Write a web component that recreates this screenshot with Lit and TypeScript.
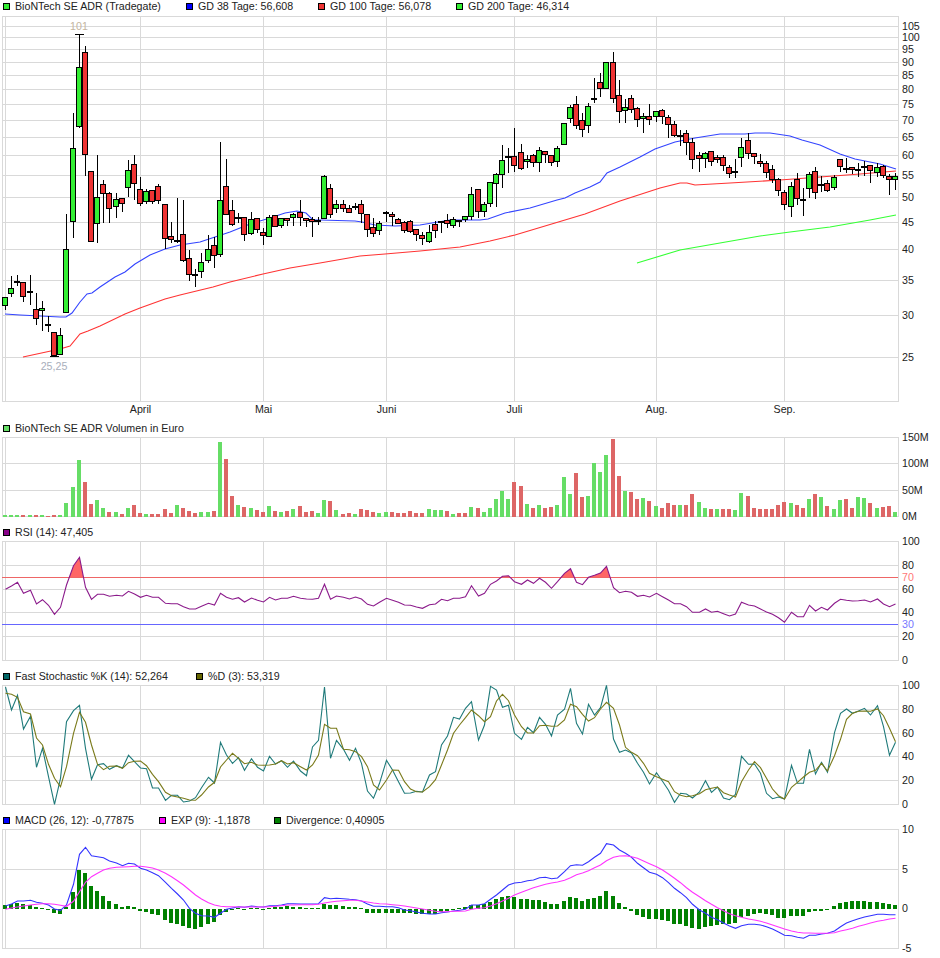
import { LitElement, css, html, svg } from "lit";
import { customElement } from "lit/decorators.js";

// all chart data below is in page pixels, read off the screenshot
type Candle = [number, number, number, number, "g" | "r"];

const CANDLES: Candle[] = [
  [297, 306, 297, 310, "g"], [288, 294, 276, 297, "g"], [281, 281, 275, 286, "g"], [282, 297, 282, 302, "r"], [291, 291, 275, 305, "g"],
  [309, 319, 293, 325, "r"], [308, 311, 301, 331, "g"], [324, 324, 316, 332, "g"], [332, 356, 332, 356, "r"], [335, 355, 328, 355, "g"],
  [249, 313, 214, 313, "g"], [148, 222, 113, 238, "g"], [67, 127, 34, 128, "g"], [52, 155, 46, 176, "r"], [171, 242, 171, 242, "r"],
  [197, 224, 155, 243, "g"], [184, 194, 180, 223, "r"], [193, 209, 192, 223, "r"], [199, 207, 193, 218, "g"], [198, 204, 198, 212, "r"],
  [170, 188, 160, 197, "g"], [164, 184, 155, 200, "r"], [189, 204, 177, 206, "r"], [191, 202, 189, 204, "g"], [190, 202, 190, 204, "r"],
  [186, 201, 184, 204, "r"], [204, 239, 204, 249, "r"], [236, 240, 222, 243, "r"], [240, 240, 198, 243, "g"], [234, 261, 200, 262, "r"],
  [258, 275, 250, 281, "r"], [274, 276, 269, 287, "r"], [262, 272, 253, 278, "g"], [249, 261, 235, 263, "g"], [245, 256, 237, 268, "r"],
  [200, 255, 142, 257, "g"], [186, 215, 159, 215, "r"], [210, 225, 200, 226, "r"], [217, 217, 213, 223, "g"], [217, 235, 217, 241, "r"],
  [219, 234, 212, 235, "g"], [218, 230, 218, 233, "r"], [232, 236, 228, 245, "r"], [217, 237, 215, 237, "g"], [215, 227, 215, 227, "r"],
  [218, 226, 218, 228, "g"], [218, 221, 218, 226, "r"], [214, 218, 213, 226, "g"], [212, 218, 200, 226, "r"], [218, 221, 218, 227, "r"],
  [219, 222, 217, 237, "r"], [220, 222, 217, 225, "r"], [176, 219, 175, 219, "g"], [188, 215, 184, 218, "r"], [204, 209, 200, 213, "g"],
  [204, 209, 200, 212, "r"], [208, 213, 205, 213, "r"], [206, 206, 203, 210, "g"], [204, 214, 200, 223, "r"], [214, 230, 214, 237, "r"],
  [227, 234, 218, 237, "r"], [223, 231, 221, 235, "g"], [212, 212, 211, 222, "g"], [214, 217, 212, 226, "r"], [219, 224, 218, 224, "r"],
  [222, 231, 221, 233, "r"], [221, 232, 220, 233, "r"], [229, 235, 229, 241, "r"], [235, 239, 232, 245, "r"], [232, 242, 225, 243, "g"],
  [224, 231, 221, 238, "r"], [221, 223, 221, 233, "g"], [220, 224, 214, 228, "r"], [219, 226, 217, 228, "g"], [220, 221, 220, 227, "g"],
  [216, 220, 216, 222, "g"], [194, 217, 187, 220, "g"], [189, 212, 189, 218, "r"], [204, 212, 202, 217, "g"], [182, 204, 182, 207, "g"],
  [174, 184, 173, 207, "g"], [160, 175, 145, 188, "g"], [156, 158, 148, 173, "r"], [156, 166, 128, 172, "r"], [152, 169, 144, 170, "r"],
  [159, 162, 155, 168, "g"], [155, 163, 154, 167, "r"], [150, 163, 147, 172, "g"], [151, 155, 151, 163, "r"], [155, 163, 155, 166, "r"],
  [148, 162, 146, 167, "g"], [123, 145, 123, 145, "g"], [107, 119, 105, 123, "g"], [104, 126, 96, 129, "r"], [120, 130, 113, 137, "r"],
  [106, 126, 103, 133, "g"], [98, 98, 78, 103, "g"], [82, 89, 73, 97, "r"], [62, 89, 62, 89, "g"], [62, 99, 52, 103, "r"],
  [95, 112, 80, 123, "r"], [107, 111, 99, 123, "g"], [98, 110, 95, 113, "r"], [108, 120, 107, 127, "r"], [116, 119, 113, 133, "g"],
  [116, 120, 104, 125, "r"], [111, 117, 111, 122, "g"], [110, 117, 109, 124, "r"], [117, 125, 115, 138, "r"], [124, 136, 121, 137, "r"],
  [135, 135, 130, 146, "g"], [133, 143, 130, 155, "r"], [142, 160, 138, 169, "r"], [155, 159, 152, 172, "r"], [153, 159, 152, 168, "g"],
  [151, 162, 151, 166, "r"], [157, 160, 155, 163, "r"], [157, 166, 155, 171, "r"], [167, 174, 165, 178, "r"], [171, 173, 159, 178, "g"],
  [147, 158, 138, 167, "g"], [140, 154, 133, 159, "r"], [153, 157, 153, 164, "r"], [161, 164, 154, 167, "r"], [163, 173, 161, 178, "r"],
  [169, 180, 165, 183, "r"], [179, 191, 178, 196, "r"], [192, 205, 190, 210, "r"], [186, 207, 182, 217, "g"], [179, 199, 173, 205, "r"],
  [199, 199, 188, 216, "g"], [174, 189, 172, 198, "g"], [171, 193, 167, 199, "r"], [184, 186, 176, 192, "g"], [183, 191, 180, 192, "r"],
  [177, 188, 175, 190, "g"], [159, 167, 159, 172, "r"], [168, 168, 158, 173, "g"], [167, 170, 167, 174, "r"], [169, 171, 163, 177, "g"],
  [166, 168, 161, 176, "r"], [165, 171, 165, 183, "r"], [167, 173, 163, 177, "g"], [166, 176, 165, 178, "r"], [176, 180, 174, 195, "r"],
  [176, 180, 173, 190, "g"],
];

// volume: top of each bar at 3x above y=420, negative = red bar
const VOLUME = [
  285, 285, 285, -285, 285, -285, 285, -288, -285, 285, 249, 201, 120, -186, -252, 240, 264, -276, 276, -282,
  264, -255, -279, 282, -282, -282, -267, -279, 255, -264, -273, -279, 276, 276, -273, 66, -117, -228, 255, -261,
  264, -270, -276, 258, -273, 276, -273, 267, -258, -276, -273, 279, 240, -243, 270, -282, -279, 282, -267, -270,
  -276, 279, 276, -276, -279, -279, -273, -279, -279, 267, 270, 270, -273, 282, -279, -279, 261, -264, 276, 264,
  237, 213, 237, -186, -198, 252, -264, 255, -264, -261, 255, 171, 222, -159, -231, 228, 129, 156, 105, -57,
  -168, 213, -216, -237, 234, -243, 258, -264, -249, -255, 255, -255, -222, 246, 264, -267, 267, -267, -267, 270,
  219, -228, -264, -267, -267, -267, -255, -246, 249, -255, -264, 237, -222, 231, -258, 267, 240, -237, -264, 231,
  234, -249, 264, -261, -258, 276,
];

// RSI: 3x above y=420
const RSI = [
  508, 498, 487, 520, 511, 552, 539, 556, 583, 562, 495, 437, 412, 502, 538, 523, 523, 529, 526, 528,
  514, 522, 532, 526, 532, 532, 550, 551, 551, 560, 567, 567, 559, 550, 555, 520, 532, 538, 533, 546,
  534, 541, 546, 532, 540, 535, 535, 529, 535, 537, 538, 535, 493, 538, 528, 532, 537, 531, 537, 553,
  558, 547, 535, 541, 547, 555, 556, 561, 565, 554, 552, 538, 542, 535, 535, 530, 497, 528, 520, 493,
  483, 469, 467, 485, 493, 480, 490, 475, 487, 505, 485, 460, 446, 487, 494, 472, 466, 459, 439, 503,
  518, 514, 517, 529, 526, 531, 520, 530, 540, 551, 551, 560, 577, 577, 567, 577, 574, 581, 588, 582,
  547, 555, 558, 567, 576, 583, 593, 607, 577, 590, 590, 556, 573, 562, 570, 550, 538, 541, 543, 542,
  540, 546, 537, 552, 560, 552,
];

// stochastic: 3x above y=665
const STOCH_K = [
  66, 135, 91, 192, 154, 307, 250, 335, 418, 340, 170, 137, 121, 250, 343, 299, 296, 313, 302, 309,
  271, 290, 309, 311, 369, 369, 406, 391, 391, 411, 408, 398, 368, 337, 354, 232, 270, 295, 278, 316,
  281, 307, 318, 274, 297, 287, 307, 288, 318, 332, 246, 226, 66, 280, 226, 253, 286, 250, 295, 378,
  400, 355, 286, 315, 350, 385, 384, 379, 381, 330, 320, 240, 213, 157, 162, 130, 110, 225, 180, 64,
  75, 127, 121, 205, 223, 187, 203, 157, 178, 213, 150, 133, 70, 175, 207, 118, 150, 128, 61, 222,
  262, 255, 264, 295, 322, 357, 323, 349, 376, 412, 385, 387, 399, 381, 347, 382, 366, 399, 404, 388,
  274, 298, 297, 325, 385, 401, 396, 402, 301, 355, 355, 253, 327, 292, 322, 203, 145, 132, 145, 138,
  130, 150, 122, 185, 271, 232,
];

const STOCH_D = [
  85, 88, 97, 140, 147, 219, 240, 298, 340, 365, 305, 205, 142, 172, 240, 298, 314, 304, 303, 310,
  293, 289, 288, 302, 328, 350, 382, 392, 396, 400, 405, 406, 390, 366, 352, 306, 285, 265, 280, 296,
  292, 300, 301, 300, 297, 287, 297, 293, 305, 315, 300, 270, 178, 190, 190, 253, 254, 260, 275, 305,
  360, 375, 345, 315, 316, 350, 372, 380, 381, 365, 344, 300, 255, 205, 180, 158, 135, 152, 170, 155,
  108, 88, 107, 150, 185, 204, 204, 182, 181, 184, 183, 165, 118, 125, 148, 168, 158, 132, 112, 130,
  180, 247, 262, 272, 295, 325, 335, 343, 350, 380, 391, 395, 392, 386, 374, 370, 366, 383, 390, 396,
  350, 315, 290, 308, 340, 372, 392, 402, 367, 352, 336, 322, 316, 295, 318, 272, 223, 163, 145, 139,
  138, 139, 132, 152, 190, 230,
];

// macd: 3x above y=805
const MACD = [
  303, 297, 288, 288, 286, 292, 295, 300, 312, 316, 300, 238, 148, 127, 152, 155, 158, 168, 174, 182,
  175, 177, 190, 195, 203, 212, 232, 250, 267, 285, 310, 325, 332, 333, 337, 325, 313, 309, 305, 307,
  303, 305, 306, 302, 302, 300, 296, 296, 297, 297, 297, 296, 278, 281, 280, 281, 283, 284, 288, 297,
  304, 304, 305, 305, 308, 315, 317, 321, 325, 327, 327, 323, 321, 318, 316, 313, 300, 300, 296, 283,
  270, 255, 240, 234, 232, 227, 225, 218, 217, 221, 219, 200, 182, 179, 181, 170, 157, 145, 116, 120,
  135, 145, 157, 175, 188, 202, 208, 218, 233, 250, 263, 278, 298, 315, 325, 337, 344, 354, 363, 370,
  362, 358, 358, 360, 365, 372, 381, 391, 392, 397, 400, 391, 391, 387, 385, 378, 365, 354, 347, 341,
  336, 332, 328, 328, 329, 329,
];

const EXP = [
  313, 309, 306, 303, 300, 298, 296, 296, 298, 301, 304, 289, 260, 232, 215, 205, 195, 190, 187, 186,
  185, 184, 184, 186, 189, 195, 205, 215, 227, 240, 255, 270, 282, 293, 300, 304, 305, 305, 306, 306,
  306, 306, 306, 305, 304, 302, 300, 300, 299, 299, 299, 298, 294, 291, 289, 287, 286, 286, 288, 291,
  294, 296, 297, 299, 301, 303, 306, 309, 312, 316, 319, 320, 320, 319, 319, 318, 313, 310, 308, 303,
  296, 288, 280, 270, 262, 255, 248, 243, 238, 234, 231, 226, 218, 209, 204, 197, 188, 180, 167, 157,
  153, 152, 155, 160, 168, 176, 185, 195, 207, 220, 233, 248, 262, 275, 287, 298, 308, 317, 326, 332,
  337, 342, 345, 349, 354, 360, 366, 372, 378, 382, 384, 384, 385, 385, 385, 383, 378, 374, 370, 364,
  359, 354, 349, 346, 342, 340,
];

// divergence: signed bar length at 3x
const DIVERGENCE = [
  11, 15, 18, 15, 12, 6, 3, -3, -13, -16, 5, 50, 116, 107, 68, 53, 38, 23, 14, 6,
  8, 5, -7, -10, -16, -19, -34, -43, -46, -52, -58, -61, -55, -46, -40, -19, -8, -4, 3, -4,
  2, 1, -4, 4, 5, 6, 8, 5, 5, 3, 2, 2, 14, 13, 12, 8, 6, 5, 1, -11,
  -13, -13, -11, -11, -11, -13, -13, -14, -16, -14, -14, -9, -7, -4, 3, 6, 12, 13, 16, 20,
  29, 36, 38, 35, 29, 29, 26, 26, 20, 15, 14, 23, 35, 32, 23, 29, 32, 38, 53, 38,
  17, 5, -6, -19, -25, -31, -31, -34, -37, -46, -46, -52, -58, -61, -55, -52, -49, -46, -46, -43,
  -25, -22, -16, -13, -16, -19, -28, -28, -22, -22, -22, -10, -7, -5, -2, 8, 17, 20, 23, 23,
  23, 20, 20, 17, 14, 11,
];

const GD38 = "5,314 20,315 40,316 60,317 66,317 72,313 80,302 87,294 92,293 100,287 115,277 125,272 135,264 150,255 165,249 180,245 200,242 215,237 230,232 250,224 270,218 285,213 297,211 306,213 313,220 320,220 355,221 362,222 375,225 395,226 420,225 450,220 480,220 488,219 505,213 530,208 557,200 565,198 575,193 590,187 600,182 607,173 620,167 640,157 655,149 675,142 695,138 720,134 745,134 755,133 770,133 790,136 802,140 820,145 840,154 855,159 880,164 896,169";
const GD100 = "23,357 60,349 70,346 80,334 88,331 100,326 125,314 140,308 165,299 180,295 213,287 230,282 263,274 290,268 320,263 360,256 385,254 420,251 460,247 490,241 515,235 555,223 585,214 620,201 660,188 680,183 687,183 695,185 730,183 780,180 820,177 860,174 896,171";
const GD200 = "637,263 680,250 720,243 760,236 790,232 830,227 870,220 896,215";

const MONTHS: [string, number][] = [
  ["April", 140], ["Mai", 263], ["Juni", 386], ["Juli", 514], ["Aug.", 656], ["Sep.", 784],
];
const V_LINES = [2, 5, 140, 263, 386, 514, 656, 784, 898];

const PRICE_TICKS: [string, number][] = [
  ["105", 26], ["100", 37], ["95", 49], ["90", 62], ["85", 75], ["80", 89], ["75", 104], ["70", 120], ["65", 137],
  ["60", 155], ["55", 175], ["50", 197], ["45", 222], ["40", 249], ["35", 280], ["30", 315], ["25", 357],
];
const VOL_TICKS: [string, number][] = [["150M", 437], ["100M", 463], ["50M", 490], ["0M", 516]];
const RSI_TICKS: [string, number][] = [["100", 541], ["80", 565], ["60", 589], ["40", 612], ["20", 636], ["0", 660]];
const STOCH_TICKS: [string, number][] = [["100", 685], ["80", 709], ["60", 733], ["40", 756], ["20", 780], ["0", 804]];
const MACD_TICKS: [string, number][] = [["10", 829], ["5", 869], ["0", 908], ["-5", 948]];

const barX = (i: number) => Math.floor(5.55 + 6.137 * i);
const barMid = (i: number) => barX(i) + 0.5;

const toPoints = (values: number[], base: number) =>
  values.map((z, i) => `${barMid(i)},${(base + z / 3).toFixed(1)}`).join(" ");

// color, label, width of the legend slot
type LegendItem = [string, string, number];

@customElement("app-root")
export class AppRoot extends LitElement {
  static styles = css`
    :host {
      display: block;
      width: 940px;
      height: 958px;
      overflow: hidden;
      background: #fff;
      color: #222;
      font-family: "Liberation Sans", Arial, sans-serif;
      font-size: 10.67px;
    }

    .legend {
      display: flex;
      height: 13px;
      line-height: 13px;
      padding-left: 3px;
      white-space: nowrap;
    }

    .legend-item {
      display: flex;
      align-items: center;
      gap: 5px;
    }

    .swatch {
      width: 5px;
      height: 5px;
      border: 1px solid #000;
    }

    svg {
      display: block;
      overflow: visible;
    }

    .grid {
      stroke: #d9d9d9;
      stroke-width: 1;
      shape-rendering: crispEdges;
    }

    .tick {
      font-family: "Liberation Sans", Arial, sans-serif;
      font-size: 10.67px;
      fill: #222;
    }

    .month {
      text-anchor: middle;
    }

    .series {
      fill: none;
      stroke-width: 1.1;
    }

    .wick {
      stroke: #000;
      stroke-width: 1;
      shape-rendering: crispEdges;
    }

    .body {
      stroke: #000;
      stroke-width: 1;
      shape-rendering: crispEdges;
    }

    .up {
      fill: #33ee33;
    }

    .down {
      fill: #ee3333;
    }

    .vol-up {
      fill: #66dd66;
    }

    .vol-down {
      fill: #dd6666;
    }

    .diverge {
      fill: #008000;
    }

    .high-note {
      fill: #c4b5a0;
      text-anchor: middle;
    }

    .low-note {
      fill: #a8aebb;
      text-anchor: middle;
    }

    .level-high {
      fill: #ff7777;
    }

    .level-low {
      fill: #7777ff;
    }
  `;

  private grid(top: number, bottom: number, rows: number[]) {
    return svg`
      ${rows.map((y) => svg`<line class="grid" x1="2" x2="898" y1=${y + 0.5} y2=${y + 0.5}></line>`)}
      ${V_LINES.map((x) => svg`<line class="grid" x1=${x + 0.5} x2=${x + 0.5} y1=${top} y2=${bottom + 1}></line>`)}
    `;
  }

  private ticks(items: [string, number][]) {
    return items.map(([label, y]) => svg`<text class="tick" x="902" y=${y + 4}>${label}</text>`);
  }

  private line(points: string, color: string) {
    return svg`<polyline class="series" points=${points} stroke=${color}></polyline>`;
  }

  private legend(items: LegendItem[]) {
    return html`
      <div class="legend">
        ${items.map(
          ([color, label, width]) => html`
            <div class="legend-item" style="width:${width}px">
              <span class="swatch" style="background:${color}"></span>
              <span>${label}</span>
            </div>
          `
        )}
      </div>
    `;
  }

  private panel(top: number, height: number, content: unknown) {
    return html`
      <svg width="940" height=${height} viewBox="0 ${top} 940 ${height}">
        ${content}
      </svg>
    `;
  }

  private candle([boxTop, boxBottom, high, low, tone]: Candle, i: number) {
    const mid = barMid(i);
    const y = Math.floor(boxTop) + 0.5;
    const h = Math.max(1, Math.round(boxBottom) - Math.floor(boxTop) - 1);
    return svg`
      <line class="wick" x1=${mid} x2=${mid} y1=${high} y2=${low}></line>
      <rect class="body ${tone === "g" ? "up" : "down"}" x=${mid - 3} y=${y} width="5" height=${h}></rect>
    `;
  }

  private priceChart() {
    return svg`
      ${this.grid(16, 401, [16, 26, 37, 49, 62, 75, 89, 104, 120, 137, 155, 175, 197, 222, 249, 280, 315, 357, 401])}
      ${this.line(GD38, "#3344ff")}
      ${this.line(GD100, "#ff3333")}
      ${this.line(GD200, "#33ff33")}
      ${CANDLES.map((c, i) => this.candle(c, i))}
      <line class="wick" x1="75" x2="84" y1="34.5" y2="34.5"></line>
      <line class="wick" x1="50" x2="59" y1="356.5" y2="356.5"></line>
      <text class="tick high-note" x="79" y="30">101</text>
      <text class="tick low-note" x="54" y="370">25,25</text>
      ${this.ticks(PRICE_TICKS)}
      ${MONTHS.map(([label, x]) => svg`<text class="tick month" x=${x + 0.5} y="413">${label}</text>`)}
    `;
  }

  private volumeChart() {
    return svg`
      ${this.grid(437, 516, [437, 463, 490, 516])}
      ${VOLUME.map((z, i) => {
        const y = Math.round(420 + Math.abs(z) / 3);
        return svg`<rect class=${z > 0 ? "vol-up" : "vol-down"} x=${barX(i) - 2} y=${y} width="4" height=${517 - y}></rect>`;
      })}
      ${this.ticks(VOL_TICKS)}
    `;
  }

  private rsiChart() {
    const points = toPoints(RSI, 420);
    return svg`
      <defs>
        <clipPath id="above-70"><rect x="0" y="530" width="940" height="47.5"></rect></clipPath>
      </defs>
      ${this.grid(541, 660, [541, 565, 589, 612, 636, 660])}
      <polygon points="5.5,577.5 ${points} 895.5,577.5" fill="#ff6666" clip-path="url(#above-70)"></polygon>
      <line x1="2" x2="898" y1="577.5" y2="577.5" stroke="#ee6666" shape-rendering="crispEdges"></line>
      <line x1="2" x2="898" y1="624.5" y2="624.5" stroke="#6666ff" shape-rendering="crispEdges"></line>
      ${this.line(points, "#8b1a8b")}
      <text class="tick level-high" x="902" y="581">70</text>
      <text class="tick level-low" x="902" y="628">30</text>
      ${this.ticks(RSI_TICKS)}
    `;
  }

  private stochChart() {
    return svg`
      ${this.grid(685, 804, [685, 709, 733, 756, 780, 804])}
      ${this.line(toPoints(STOCH_K, 665), "#1f7a7a")}
      ${this.line(toPoints(STOCH_D, 665), "#7a7a1a")}
      ${this.ticks(STOCH_TICKS)}
    `;
  }

  private macdChart() {
    return svg`
      ${this.grid(829, 948, [829, 869, 948])}
      ${DIVERGENCE.map((d, i) => {
        const len = Math.max(1, Math.round(Math.abs(d) / 3));
        return svg`<rect class="diverge" x=${barX(i) - 2} y=${d > 0 ? 909 - len : 909} width="4" height=${len}></rect>`;
      })}
      ${this.line(toPoints(MACD, 805), "#3333ff")}
      ${this.line(toPoints(EXP, 805), "#ff33ff")}
      ${this.ticks(MACD_TICKS)}
    `;
  }

  protected render() {
    return html`
      ${this.legend([
        ["#33ee33", "BioNTech SE ADR (Tradegate)", 183],
        ["#0000ff", "GD 38 Tage: 56,608", 132],
        ["#ee3333", "GD 100 Tage: 56,078", 138],
        ["#33ee33", "GD 200 Tage: 46,314", 120],
      ])}
      ${this.panel(13, 409, this.priceChart())}
      ${this.legend([["#66dd66", "BioNTech SE ADR Volumen in Euro", 200]])}
      ${this.panel(435, 91, this.volumeChart())}
      ${this.legend([["#880088", "RSI (14): 47,405", 120]])}
      ${this.panel(539, 131, this.rsiChart())}
      ${this.legend([
        ["#006666", "Fast Stochastic %K (14): 52,264", 193],
        ["#666600", "%D (3): 53,319", 120],
      ])}
      ${this.panel(683, 131, this.stochChart())}
      ${this.legend([
        ["#0000ff", "MACD (26, 12): -0,77875", 156],
        ["#ff00ff", "EXP (9): -1,1878", 115],
        ["#008000", "Divergence: 0,40905", 130],
      ])}
      ${this.panel(827, 131, this.macdChart())}
    `;
  }
}
